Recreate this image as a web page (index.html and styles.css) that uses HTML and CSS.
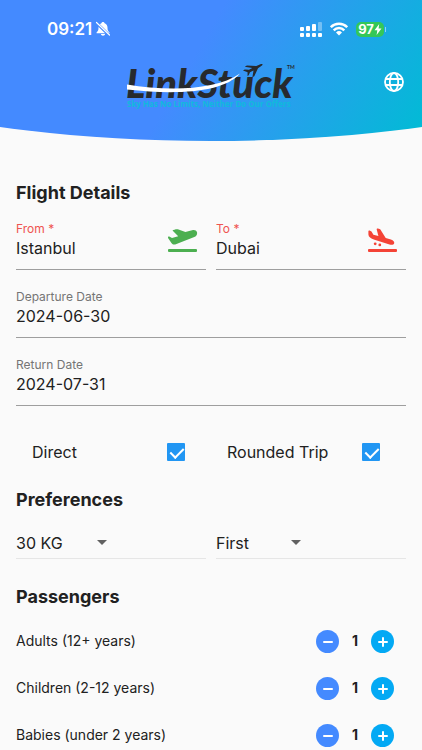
FILE: index.html
```html
<!DOCTYPE html>
<html lang="en">
<head>
<meta charset="utf-8">
<meta name="viewport" content="width=device-width, initial-scale=1">
<title>LinkStuck</title>
<link rel="stylesheet" href="styles.css">
</head>
<body>
<header class="header">
  <div class="status">
    <div class="status-left">
      <span class="clock">09:21</span>
      <svg class="bell" viewBox="0 0 16 16" width="16" height="16" aria-hidden="true">
        <path fill="#fff" d="M8 1c.9 0 1.500.6 1.600 1.300C11.600 3 12.500 4.800 12.500 6.800c0 2.600.6 3.500 1.900 4.500v.9H1.600v-.9c1.300-1 1.900-1.900 1.900-4.500 0-2 .9-3.800 2.900-4.500C6.500 1.600 7.100 1 8 1zM5.900 13h4.200c-.2 1-1 1.700-2.100 1.700S6.100 14 5.900 13z"/>
        <path stroke="#448aff" stroke-width="3" d="M1 1.500 14.500 14.500"/>
        <path stroke="#fff" stroke-width="1.200" stroke-linecap="round" d="M1.500 1.500 14.500 14"/>
      </svg>
    </div>
    <div class="status-right">
      <svg viewBox="0 0 22 15" width="22" height="15" aria-hidden="true">
        <g fill="#fff">
          <rect x="0" y="5" width="4" height="4" rx="1"/><rect x="6" y="4" width="4" height="5" rx="1"/><rect x="12" y="2" width="4" height="7" rx="1"/>
          <rect x="18" y="0" width="4" height="9" rx="1" opacity=".35"/>
          <rect x="0" y="11" width="4" height="4" rx="1"/><rect x="6" y="11" width="4" height="4" rx="1"/><rect x="12" y="11" width="4" height="4" rx="1"/><rect x="18" y="11" width="4" height="4" rx="1"/>
        </g>
      </svg>
      <svg viewBox="0 0 18 14" width="18" height="14" aria-hidden="true">
        <g fill="none" stroke="#fff" stroke-width="2.500"><path d="M.8 5.200a11.600 11.600 0 0 1 16.400 0"/><path d="M3.700 8.300a7.500 7.500 0 0 1 10.600 0"/></g>
        <path fill="#fff" d="M6 10.500a4.300 4.300 0 0 1 6 0L9 13.500z"/>
      </svg>
      <div class="battery"><span>97</span>
        <svg viewBox="0 0 8 11" width="8" height="11" aria-hidden="true"><path fill="#fff" d="M5.200 0 .5 6.200h2.800L2.600 11l4.900-6.400H4.600z"/></svg>
      </div>
    </div>
  </div>
  <div class="brand-row">
    <svg class="logo" viewBox="0 0 170 50" width="170" height="50" role="img" aria-label="LinkStuck">
      <text class="logo-name" x="0" y="37">LinkStuck</text>
      <text class="logo-tm" x="161" y="8">TM</text>
      <path fill="#fff" d="M1 23.500C40 30 89 30 114 12.500 97 32 50 34 1 28.500z"/>
      <path fill="#272a2e" d="M117 9.500l1.700-1 4.300.3 3.300-1.700-7.600-1.300 2.200-1.200 9.500.4 4-1.800c1.100-.5 2-.3 2.100.1.200.5-.3 1.200-1.200 1.700l-3.300 2.200-3.700 8-1.900 1 1.100-6.800-3.500 1.900-1.300 3-1.200.6.100-3.600z"/>
      <text class="logo-tag" x="1" y="46">Sky Has No Limits, Neither Do Our Offers</text>
    </svg>
    <button class="lang" type="button" aria-label="Language">
      <svg viewBox="0 0 20 20" width="20" height="20" aria-hidden="true"><g fill="none" stroke="#fff" stroke-width="1.800"><circle cx="10" cy="10" r="9"/><ellipse cx="10" cy="10" rx="4.200" ry="9"/><path d="M1.600 7h16.800M1.600 13h16.800"/></g></svg>
    </button>
  </div>
</header>
<main class="content">
  <h2>Flight Details</h2>
  <div class="pair">
    <div class="field">
      <div class="field-text"><label class="required" for="from">From *</label><input id="from" type="text" value="Istanbul"></div>
      <svg class="plane" viewBox="0 0 30 26" width="30" height="26" aria-hidden="true"><g fill="#4caf50"><rect x="0" y="22" width="29" height="3" rx="1"/><path d="M29 5.300c-.5-1.700-2.300-2.600-4-2.200l-7.600 2L9.800 2.300C8.400 2 5.500 2.700 4.500 3.600l5.700 5.600L4 10.900.8 9.200C.4 9.600-.4 10.200.2 11.200l3.400 5c.9 1.200 2 1.600 3.600 1.200l19.100-7.300c2.100-.8 3.200-3.100 2.700-4.800z"/></g></svg>
    </div>
    <div class="field">
      <div class="field-text"><label class="required" for="to">To *</label><input id="to" type="text" value="Dubai"></div>
      <svg class="plane" viewBox="0 0 30 26" width="30" height="26" aria-hidden="true"><g fill="#f44336"><rect x="0" y="22" width="29" height="3" rx="1"/><path d="M.4 4.200C.4 3.500 1 3.400 1.600 3.600l1.900.8 1.900 3.400 5 1.200-1.700-6.600c-.1-.8.4-1.100 1.100-1 1.400.1 2.300.5 2.900 1.500l5 8 5.200 1.500c2.600.8 3.700 2.300 3.300 3.800-.5 1.800-2.600 2-4.700 1.300L6.500 12.700C2.700 11.500.5 9.900.4 7.500z"/><circle cx="7.200" cy="16.800" r="1.400"/><circle cx="11.800" cy="17.900" r="1.400"/></g></svg>
    </div>
  </div>
  <div class="field"><div class="field-text"><label for="dep">Departure Date</label><input id="dep" type="text" value="2024-06-30"></div></div>
  <div class="field"><div class="field-text"><label for="ret">Return Date</label><input id="ret" type="text" value="2024-07-31"></div></div>
  <div class="checks">
    <label class="check">Direct<input type="checkbox" checked></label>
    <label class="check">Rounded Trip<input type="checkbox" checked></label>
  </div>
  <h2>Preferences</h2>
  <div class="pair">
    <div class="choice">
      <select class="weight" aria-label="Baggage weight"><option>30 KG</option></select>
      <svg viewBox="0 0 10 5" width="10" height="5" aria-hidden="true"><path fill="#616161" d="M0 0h10L5 5z"/></svg>
    </div>
    <div class="choice">
      <select class="cabin" aria-label="Cabin class"><option>First</option></select>
      <svg viewBox="0 0 10 5" width="10" height="5" aria-hidden="true"><path fill="#616161" d="M0 0h10L5 5z"/></svg>
    </div>
  </div>
  <h2>Passengers</h2>
  <div class="passengers">
    <div class="passenger"><span>Adults (12+ years)</span>
      <div class="stepper">
        <button class="minus" type="button" aria-label="Fewer adults"><svg viewBox="0 0 12 12" width="12" height="12"><path d="M2 6h8"/></svg></button>
        <output>1</output>
        <button class="plus" type="button" aria-label="More adults"><svg viewBox="0 0 12 12" width="12" height="12"><path d="M2 6h8M6 2v8"/></svg></button>
      </div>
    </div>
    <div class="passenger"><span>Children (2-12 years)</span>
      <div class="stepper">
        <button class="minus" type="button" aria-label="Fewer children"><svg viewBox="0 0 12 12" width="12" height="12"><path d="M2 6h8"/></svg></button>
        <output>1</output>
        <button class="plus" type="button" aria-label="More children"><svg viewBox="0 0 12 12" width="12" height="12"><path d="M2 6h8M6 2v8"/></svg></button>
      </div>
    </div>
    <div class="passenger"><span>Babies (under 2 years)</span>
      <div class="stepper">
        <button class="minus" type="button" aria-label="Fewer babies"><svg viewBox="0 0 12 12" width="12" height="12"><path d="M2 6h8"/></svg></button>
        <output>1</output>
        <button class="plus" type="button" aria-label="More babies"><svg viewBox="0 0 12 12" width="12" height="12"><path d="M2 6h8M6 2v8"/></svg></button>
      </div>
    </div>
  </div>
</main>
</body>
</html>
```
FILE: styles.css
```css
* { box-sizing: border-box; }

body {
  margin: 0;
  background: #fafafa;
  color: #212121;
  font: 16px/20px Inter, "Liberation Sans", sans-serif;
}

svg { display: block; flex: none; }
button { padding: 0; border: 0; cursor: pointer; }

.header {
  padding: 20px 16px 30px;
  background: linear-gradient(120deg, #448aff 45%, #00bcd4 100%);
  clip-path: ellipse(115% 100% at 50% 0);
  color: #fff;
}

.status {
  display: flex;
  justify-content: space-between;
  align-items: center;
  height: 18px;
  padding: 0 22px 0 31px;
}

.status-left { display: flex; align-items: center; gap: 3px; }
.status-right { display: flex; align-items: center; gap: 8px; }
.clock { font-size: 17px; font-weight: 600; }

.battery {
  position: relative;
  display: flex;
  align-items: center;
  justify-content: center;
  width: 28px;
  height: 15px;
  border-radius: 5px;
  background: #34c759;
  font-size: 13px;
  font-weight: 700;
}

.battery::after {
  content: "";
  position: absolute;
  left: 29px;
  top: 5px;
  width: 1px;
  height: 5px;
  background: #ffffff80;
}

.brand-row {
  display: grid;
  grid-template-columns: 1fr auto 1fr;
  align-items: center;
  margin-top: 23px;
}

.logo { grid-column: 2; overflow: visible; }
.logo-name { font: italic 900 40px Lato, sans-serif; fill: #272a2e; }
.logo-tm { font: 700 5px Lato, sans-serif; fill: #272a2e; }
.logo-tag { font: 700 8px "Open Sans", sans-serif; fill: #10b9dc; }
.lang { justify-self: end; background: none; margin: 0 2px 8px 0; }

.content { padding: 43px 16px 3px; }

h2 { margin: 0; font-size: 18px; line-height: 18px; font-weight: 700; }

.pair { display: grid; grid-template-columns: 1fr 1fr; gap: 10px; }

.field {
  display: flex;
  align-items: center;
  justify-content: space-between;
  height: 68px;
  padding: 8px 8px 0 0;
  border-bottom: 1px solid #9e9e9e;
}

.field-text { display: flex; flex: 1; flex-direction: column; min-width: 0; }
.field label { font-size: 12px; line-height: 16px; color: #757575; }
.field .required { color: #ef5350; }

input[type="text"], select {
  width: 100%;
  height: 22px;
  padding: 0;
  border: 0;
  background: none;
  color: inherit;
  font: inherit;
}

.checks { display: grid; grid-template-columns: 1fr 1fr; margin: 36px 0 29px; }

.check {
  display: flex;
  align-items: center;
  justify-content: space-between;
  padding: 0 26px 0 16px;
}

.check input {
  position: relative;
  appearance: none;
  width: 18px;
  height: 18px;
  margin: 0;
  border-radius: 1px;
  background: #2196f3;
}

.check input:checked::after {
  content: "";
  position: absolute;
  left: 6px;
  top: 2px;
  width: 6px;
  height: 11px;
  border: solid #fff;
  border-width: 0 2px 2px 0;
  transform: rotate(45deg);
}

.choice {
  display: flex;
  align-items: center;
  height: 50px;
  margin-bottom: 29px;
  padding-top: 18px;
  border-bottom: 1px solid #e6e6e6;
}

select { appearance: none; }
.weight { width: 81px; }
.cabin { width: 75px; }

.passengers { display: grid; gap: 24px; margin-top: 24px; font-size: 14px; }
.passenger { display: flex; align-items: center; justify-content: space-between; height: 23px; }
.passenger span, .stepper output { padding-bottom: 2px; }
.stepper { display: flex; align-items: center; gap: 12px; margin-right: 12px; }
.stepper output { width: 8px; text-align: center; font-weight: 700; }
.stepper button { display: grid; place-items: center; width: 23px; height: 23px; border-radius: 50%; }
.minus { background: #448aff; }
.plus { background: #03a9f4; }
.stepper path { fill: none; stroke: #fff; stroke-width: 2; stroke-linecap: round; }
```
